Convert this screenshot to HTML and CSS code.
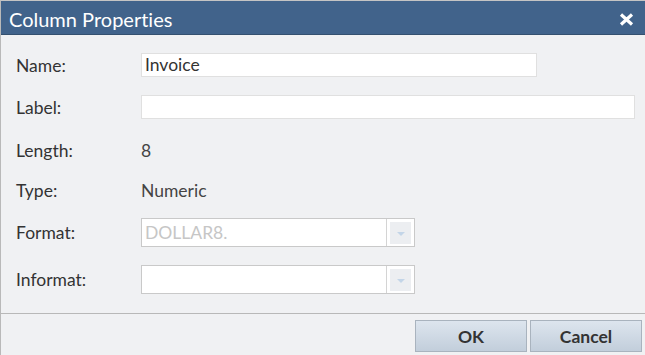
FILE: index.html
```html
<!DOCTYPE html>
<html>
<head>
<meta charset="utf-8">
<link rel="stylesheet" href="styles.css">
</head>
<body>
<div class="dialog">
  <div class="titlebar">
    <span class="title">Column Properties</span>
    <svg class="close" width="15" height="13" viewBox="0 0 15 13"><path d="M2 1.5 L13 11.5 M13 1.5 L2 11.5" stroke="#fff" stroke-width="3.2" fill="none"/></svg>
  </div>
  <div class="form">
    <div class="row r-name">
      <div class="lbl">Name:</div>
      <div class="input name-input">Invoice</div>
    </div>
    <div class="row r-label">
      <div class="lbl">Label:</div>
      <div class="input label-input"></div>
    </div>
    <div class="row r-text r-length">
      <div class="lbl">Length:</div>
      <div class="val">8</div>
    </div>
    <div class="row r-text r-type">
      <div class="lbl">Type:</div>
      <div class="val">Numeric</div>
    </div>
    <div class="row r-combo r-format">
      <div class="lbl">Format:</div>
      <div class="combo">
        <div class="combo-text disabled">DOLLAR8.</div>
        <div class="combo-btn"><span class="arrow"></span></div>
      </div>
    </div>
    <div class="row r-combo r-informat">
      <div class="lbl">Informat:</div>
      <div class="combo">
        <div class="combo-text"></div>
        <div class="combo-btn"><span class="arrow"></span></div>
      </div>
    </div>
  </div>
  <div class="footer">
    <button class="btn ok">OK</button>
    <button class="btn">Cancel</button>
  </div>
</div>
</body>
</html>
```
FILE: styles.css
```css
html, body {
  margin: 0;
  padding: 0;
  background: #f0f1f3;
}
body {
  font-family: Lato, "Liberation Sans", sans-serif;
  font-size: 17.5px;
  color: #333;
  font-variant-ligatures: none;
}
.dialog {
  width: 645px;
  height: 355px;
  box-sizing: border-box;
  border-top: 1px solid #c4c4c4;
  border-left: 1px solid #b9b9b9;
  background: #f0f1f3;
  display: flex;
  flex-direction: column;
  overflow: hidden;
}
.titlebar {
  height: 34px;
  box-sizing: border-box;
  background: #41638b;
  border-bottom: 1px solid #34506f;
  display: flex;
  align-items: flex-start;
  justify-content: space-between;
  padding: 5px 11px 0 8px;
}
.title {
  color: #fff;
  font-size: 20px;
  line-height: 26px;
}
.close {
  margin-top: 7px;
}
.form {
  padding: 18px 0 0 15px;
  display: flex;
  flex-direction: column;
  flex: 1;
}
.row {
  display: flex;
  align-items: center;
  height: 24px;
}
.lbl {
  width: 125px;
  flex: none;
  color: #333;
}
.val {
  color: #444;
}
.r-label { margin-top: 18px; }
.r-length { margin-top: 19px; }
.r-type { margin-top: 16px; }
.r-format { margin-top: 16px; height: 29px; }
.r-informat { margin-top: 18px; height: 29px; }
.input {
  height: 24px;
  box-sizing: border-box;
  background: #fff;
  border: 1px solid #e0e0e0;
  padding-left: 3px;
  line-height: 22px;
  color: #333;
}
.name-input { width: 396px; }
.label-input { width: 494px; }
.combo {
  width: 274px;
  height: 29px;
  box-sizing: border-box;
  background: #fff;
  border: 1px solid #c9c9c9;
  display: flex;
}
.combo-text {
  flex: 1;
  padding-left: 3px;
  line-height: 27px;
  border-right: 1px solid #d4d4d4;
}
.combo-text.disabled {
  color: #c6c6c6;
}
.combo-btn {
  width: 27px;
  display: flex;
  align-items: center;
  justify-content: center;
}
.combo-btn .arrow {
  width: 21px;
  height: 22px;
  background: #eceef1;
  display: flex;
  align-items: center;
  justify-content: center;
}
.combo-btn .arrow::after {
  content: "";
  width: 0;
  height: 0;
  border-left: 4px solid transparent;
  border-right: 4px solid transparent;
  border-top: 4px solid #c3d5e8;
  margin-top: 2px;
}
.footer {
  border-top: 1px solid #b8b8b8;
  height: 42px;
  box-sizing: border-box;
  display: flex;
  justify-content: flex-end;
  gap: 3px;
  padding: 6px 3px 0 0;
}
.btn {
  width: 112px;
  height: 32px;
  box-sizing: border-box;
  border: 1px solid #a9b3be;
  background: linear-gradient(#dde5ee, #c2cedb);
  font-family: Lato, "Liberation Sans", sans-serif;
  font-size: 17.5px;
  font-weight: bold;
  color: #333;
  padding: 0;
  font-variant-ligatures: none;
}
```
